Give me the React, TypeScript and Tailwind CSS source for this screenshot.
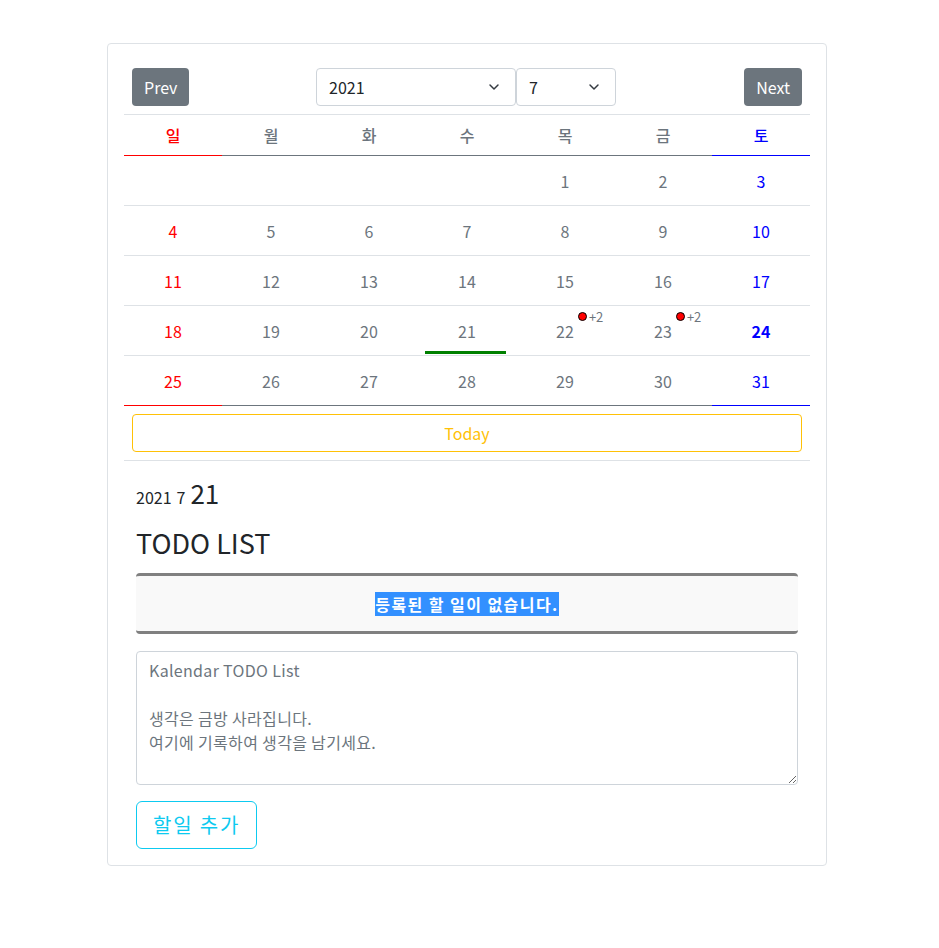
import { ChevronDown } from 'lucide-react'

type Day = { d: number; col: number } | null

const weeks: Day[][] = (() => {
  const cells: Day[] = []
  for (let i = 0; i < 4; i++) cells.push(null)
  for (let d = 1; d <= 31; d++) cells.push({ d, col: (d + 3) % 7 })
  const rows: Day[][] = []
  for (let i = 0; i < cells.length; i += 7) rows.push(cells.slice(i, i + 7))
  return rows
})()

const extras: Record<number, { todos?: number; bold?: boolean; today?: boolean }> = {
  21: { today: true },
  22: { todos: 2 },
  23: { todos: 2 },
  24: { bold: true },
}

const dayNames = ['일', '월', '화', '수', '목', '금', '토']

function colorFor(col: number) {
  if (col === 0) return 'text-[#ff0000]'
  if (col === 6) return 'text-[#0000ff]'
  return 'text-[#6c757d]'
}

function borderFor(col: number) {
  if (col === 0) return 'border-[#ff0000]'
  if (col === 6) return 'border-[#0000ff]'
  return 'border-[#6c757d]'
}

export default function App() {
  const font = { fontFamily: '"Noto Sans CJK KR", "Noto Sans", sans-serif' }

  return (
    <div className="min-h-[948px] bg-white pt-[43px]" style={font}>
      <div className="ml-[107px] w-[720px] rounded border border-[#dee2e6] p-4 text-[#212529]">
        {/* header */}
        <div className="grid grid-cols-[1fr_auto_1fr] items-center border-b border-[#dee2e6] p-2">
          <div>
            <button className="h-[38px] rounded bg-[#6c757d] px-3 text-[16px] text-white">Prev</button>
          </div>
          <div className="-ml-[2px] flex">
            <div className="relative flex h-[38px] w-[200px] items-center rounded border border-[#ced4da] pl-3 text-[16px]">
              2021
              <ChevronDown className="absolute right-[13px] h-4 w-4 text-[#343a40]" strokeWidth={2.2} />
            </div>
            <div className="relative flex h-[38px] w-[100px] items-center rounded border border-[#ced4da] pl-3 text-[16px]">
              7
              <ChevronDown className="absolute right-[13px] h-4 w-4 text-[#343a40]" strokeWidth={2.2} />
            </div>
          </div>
          <div className="flex justify-end">
            <button className="h-[38px] rounded bg-[#6c757d] px-3 text-[16px] text-white">Next</button>
          </div>
        </div>

        {/* day names */}
        <div className="grid grid-cols-7">
          {dayNames.map((n, i) => (
            <div
              key={n}
              className={`flex h-[41px] items-center justify-center border-b text-[16px] font-medium ${colorFor(i)} ${borderFor(i)}`}
            >
              {n}
            </div>
          ))}
        </div>

        {/* dates */}
        {weeks.map((week, wi) => {
          const last = wi === weeks.length - 1
          return (
            <div key={wi} className="grid grid-cols-7">
              {week.map((day, ci) => {
                const ex = day ? extras[day.d] ?? {} : {}
                return (
                  <div
                    key={ci}
                    className={`relative flex h-[50px] items-center justify-center border-b text-[16px] ${
                      last ? borderFor(ci) : 'border-[#dee2e6]'
                    } ${colorFor(ci)} ${ex.bold ? 'font-bold' : ''}`}
                  >
                    {day && (
                      <span className="relative">
                        {day.d}
                        {ex.todos && (
                          <span className="absolute left-[calc(100%+4px)] top-[-12px] flex items-center gap-[2px] whitespace-nowrap text-[13px] text-[#6c757d]">
                            <span className="h-[9px] w-[9px] rounded-full border border-black bg-[#ff0000]" />+{ex.todos}
                          </span>
                        )}
                      </span>
                    )}
                    {ex.today && <span className="absolute bottom-[1px] left-[7px] right-[10px] h-[3px] bg-[#008000]" />}
                  </div>
                )
              })}
            </div>
          )
        })}

        {/* today */}
        <div className="border-b border-[#dee2e6] p-2">
          <button className="h-[38px] w-full rounded border border-[#ffc107] text-[16px] text-[#ffc107]">Today</button>
        </div>

        {/* todo */}
        <div className="px-3 pt-[19px]">
          <div className="flex items-baseline gap-[5px] leading-none">
            <span className="text-[16px]">2021</span>
            <span className="text-[16px]">7</span>
            <span className="text-[26px]">21</span>
          </div>
          <h3 className="mt-[23px] text-[27px] leading-none">TODO LIST</h3>
          <div className="mt-[17px] flex h-[61px] items-center justify-center rounded border-y-[3px] border-[#808080] bg-[#f9f9f9]">
            <span className="bg-[#3390ff] text-[16px] font-bold leading-[24px] tracking-[0.09em] text-white">
              등록된 할 일이 없습니다.
            </span>
          </div>
          <textarea
            rows={5}
            className="mt-[17px] block w-full rounded border border-[#ced4da] px-3 py-[6px] text-[16px] leading-[24px] tracking-[0.02em] text-[#212529] placeholder:text-[#6c757d]"
            placeholder={'Kalendar TODO List\n\n생각은 금방 사라집니다.\n여기에 기록하여 생각을 남기세요.'}
          />
          <button className="mt-[16px] h-[48px] rounded-md border border-[#0dcaf0] px-4 text-[20px] tracking-[0.09em] text-[#0dcaf0]">
            할일 추가
          </button>
        </div>
      </div>
    </div>
  )
}
